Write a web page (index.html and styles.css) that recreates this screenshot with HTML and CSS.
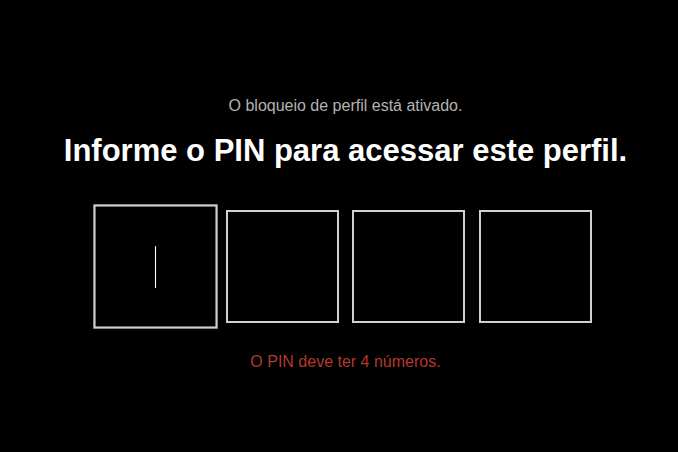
FILE: index.html
```html
<!DOCTYPE html>
<html lang="pt-BR">
<head>
  <meta charset="UTF-8" />
  <meta name="viewport" content="width=device-width, initial-scale=1.0"/>
  <title>Bloqueio de perfil</title>
  <link rel="stylesheet" href="styles.css">
</head>
<body>
  <div class="lock">
    <div class="lock-status">O bloqueio de perfil está ativado.</div>
    <h1 class="lock-title">Informe o PIN para acessar este perfil.</h1>

    <div class="pin">
      <div class="pin-box active"><span class="caret"></span></div>
      <div class="pin-box"></div>
      <div class="pin-box"></div>
      <div class="pin-box"></div>
    </div>

    <div class="pin-error">O PIN deve ter 4 números.</div>
  </div>
</body>
</html>
```

FILE: styles.css
```css
html, body {
  margin: 0;
  padding: 0;
  height: 100%;
  background: #000;
  color: #fff;
  font-family: 'Liberation Sans', Arial, sans-serif;
  overflow: hidden;
}

.lock {
  display: flex;
  flex-direction: column;
  align-items: center;
  padding: 96px 0 0 13px;
}

.lock-status {
  font-size: 16px;
  color: #b3b3b3;
  line-height: 20px;
}

.lock-title {
  margin: 17px 0 0;
  font-size: 31px;
  font-weight: 700;
  line-height: 36px;
}

.pin {
  display: flex;
  gap: 13.5px;
  margin-top: 41px;
}

.pin-box {
  width: 113px;
  height: 113px;
  box-sizing: border-box;
  border: 2px solid #d0d0d0;
  display: flex;
  align-items: center;
  justify-content: center;
}

.pin-box.active {
  transform: scale(1.1);
}

.caret {
  width: 1px;
  height: 38px;
  background: #fff;
}

.pin-error {
  margin-top: 30px;
  font-size: 16px;
  color: #b3392d;
}
```
